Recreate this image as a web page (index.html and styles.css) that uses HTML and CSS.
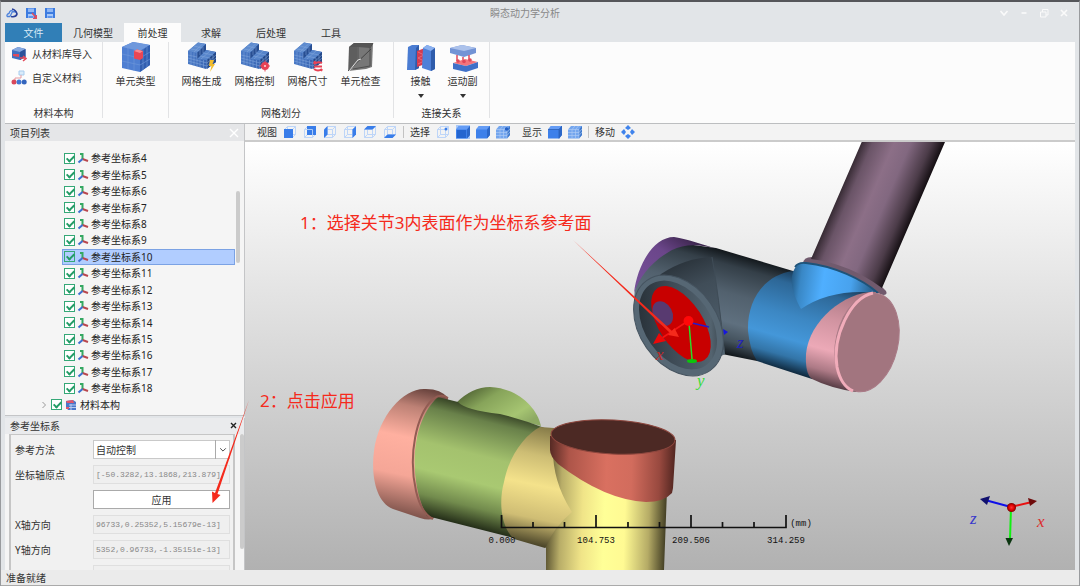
FILE: index.html
```html
<!DOCTYPE html>
<html lang="zh-CN">
<head>
<meta charset="utf-8">
<title>瞬态动力学分析</title>
<link rel="stylesheet" href="styles.css">
</head>
<body>
<svg class="defs" aria-hidden="true">
  <defs>
    <linearGradient id="steel" x1="0" x2="1"><stop offset="0" stop-color="#4a7ac6"/><stop offset="1" stop-color="#2f5aa8"/></linearGradient>
    <symbol id="axes" viewBox="0 0 12 12"><path d="M5.500 7V2H3" fill="none" stroke="#35a862" stroke-width="2"/><path d="M5.500 7L11 9" stroke="#b9474f" stroke-width="2"/><path d="M5.500 7L1.500 10.500" stroke="#3c6fd0" stroke-width="2"/></symbol>
    <symbol id="cubeline" viewBox="0 0 14 14"><path d="M1.500 4.500H9.500V12.500H1.500ZM4.500 1.500H12.500V9.500H4.500ZM1.500 4.500L4.500 1.500M9.500 4.500L12.500 1.500M9.500 12.500L12.500 9.500M1.500 12.500L4.500 9.500" fill="none" stroke="#bdd5f8" stroke-width="1"/></symbol>
    <symbol id="cubefull" viewBox="0 0 14 14"><path d="M0 4.500L3 1H14V10L11 13.500H0Z" fill="#3d80ea"/><path d="M0 4.500L3 1H14L11 4.500Z" fill="#649cf5"/><path d="M11 4.500L14 1V10L11 13.500Z" fill="#2b67c8"/></symbol>
    <symbol id="cubemesh" viewBox="0 0 14 14"><path d="M0 4.500L3 1H14V10L11 13.500H0Z" fill="#74a6ee"/><path d="M11 4.500L14 1V10L11 13.500Z" fill="#3e78cc"/><path d="M0 4.500H11V13M4 4.500V13M7.500 4.500V13M0 7.500H11L14 4M0 10.500H11L14 7M4 4.500L7 1M7.500 4.500L10.500 1" fill="none" stroke="#b4cff5" stroke-width=".6"/></symbol>
    <symbol id="mesh" viewBox="0 0 30 30">
      <path d="M1 9L11 0.500L19 2L19 8L29 10V20L19 27L1 22Z" fill="url(#steel)"/>
      <path d="M1 9L11 .5L19 2L10 11Z" fill="#5f8ccf"/><path d="M10 17L19 8L29 10L20 18Z" fill="#5684ca"/><path d="M20 18L29 10V20L20 27Z" fill="#244888"/><path d="M10 11L19 2V8L10 17Z" fill="#274e92"/>
      <path d="M4 10V23M7 10.500V24M10 11V24.500M13 17.500V25M16.500 18V26M20 18V27M1 13L10 15M1 16L20 21L29 13M1 19L20 24L29 16M4 7L12 8.500M7 4L15 6M13 7V13M16 5V11M13 14L23 16M16 11L26 13M23 16V24M26 13V22M7 10L16 1.500M14 17L23 9" fill="none" stroke="#86abdf" stroke-width=".5"/>
    </symbol>
    <symbol id="disk" viewBox="0 0 12 12"><path d="M1 1H11V11H1Z" fill="#3c7be0"/><path d="M3 1.500H9V5H3Z" fill="#8eb7f5"/><path d="M3 7H9V11H3Z" fill="#a5c8fa"/><path d="M3.500 9H8.500V11H3.500Z" fill="#5e95ec"/></symbol>
  </defs>
</svg>
<div class="app">
  <header class="titlebar">
    <div class="quick">
      <svg class="i12" viewBox="0 0 12 12"><path d="M1 9.500H4M1 9.500Q.5 7 3 6.500Q4 2.500 7 4M4 9.500L6.500 4.500L10 5" fill="none" stroke="#4c82dc" stroke-width="1.300"/><path d="M6 2Q10 3 11 7Q10 10.500 5 9.500" fill="none" stroke="#28419b" stroke-width="1.600"/></svg>
      <svg class="i12" viewBox="0 0 12 12"><use href="#disk"/><path d="M7 6L11.500 11M11.500 8V11.500H8" fill="none" stroke="#e34b5b" stroke-width="1.400"/></svg>
      <svg class="i12"><use href="#disk"/></svg>
    </div>
    <h1>瞬态动力学分析</h1>
    <div class="winbtns">
      <button aria-label="折叠"><svg viewBox="0 0 10 10"><path d="M1.500 3L5 7L8.500 3"/></svg></button>
      <button aria-label="最小化"><svg viewBox="0 0 10 10"><path d="M2.500 5H7.500"/></svg></button>
      <button aria-label="还原"><svg class="thin" viewBox="0 0 10 10"><path d="M1.500 4H7V9H1.500ZM3.500 4V1.500H9V7H7"/></svg></button>
      <button aria-label="关闭"><svg viewBox="0 0 10 10"><path d="M2 2L8 8M8 2L2 8"/></svg></button>
    </div>
  </header>
  <nav class="tabs">
    <button class="tab file">文件</button><button class="tab wide">几何模型</button><button class="tab active">前处理</button><button class="tab">求解</button><button class="tab">后处理</button><button class="tab">工具</button>
  </nav>
  <section class="ribbon">
    <div class="group g-material">
      <div class="lines">
        <button class="line"><svg class="i16" viewBox="0 0 16 16"><path d="M1 4L7 1L14.500 3V11L9 14L1 12Z" fill="#3f6fc0"/><path d="M1 4L7 1L14.500 3L9 6Z" fill="#86a9e0"/><path d="M9 6L14.500 3V11L9 14Z" fill="#2c529a"/><path d="M2 8H8V11L2 10Z" fill="#df4b5c"/><path d="M9 12H14M12 10L15 12.500L12 15" fill="none" stroke="#e34b5b" stroke-width="1.500"/></svg>从材料库导入</button>
        <button class="line"><svg class="i16" viewBox="0 0 16 16"><path d="M8 1H13V5H8Z" fill="#d9ebfa" stroke="#a9cdee"/><path d="M10 5V8H4V11" fill="none" stroke="#e69aa0"/><circle cx="3" cy="12" r="2.500" fill="#d9485b"/><circle cx="8" cy="12" r="2.500" fill="#4277d3"/><circle cx="13.200" cy="12" r="2.500" fill="#3465bd"/></svg>自定义材料</button>
      </div>
      <div class="caption">材料本构</div>
    </div>
    <div class="group g-type">
      <div class="tools"><button class="tool"><svg class="i30" viewBox="0 0 30 30"><path d="M1 5L12 0L29 3V23L19 30L1 26Z" fill="#4f7fd2"/><path d="M1 5L12 0L29 3L19 9Z" fill="#6e98dd"/><path d="M19 9L29 3V23L19 30Z" fill="#315eb0"/><path d="M7 6V27M13 7.500V29M1 12L19 16L29 10M1 19L19 23L29 17M7 2.500L24 6M22 7V28M26 5V25M6 6L18 1M13 7.500L24 2" fill="none" stroke="#7198da" stroke-width=".6"/><path d="M13 9L16 7.500L22 9V16L19 18L13 16.500Z" fill="#ea4654"/><path d="M13 9L16 7.500L22 9L19 11Z" fill="#fa8990"/></svg><span>单元类型</span></button></div>
      <div class="caption"></div>
    </div>
    <div class="group g-mesh">
      <div class="tools">
        <button class="tool"><svg class="i30" viewBox="0 0 30 30"><use href="#mesh"/><path d="M23 18H27L25.500 22H28L23 30L24.500 24H22Z" fill="#f2bd2d"/></svg><span>网格生成</span></button>
        <button class="tool"><svg class="i30" viewBox="0 0 30 30"><use href="#mesh"/><circle cx="25" cy="24" r="2.500" fill="#fbdadc" stroke="#e84355" stroke-width="3"/><path d="M25 18.500V29.500M19.500 24H30" stroke="#e84355" stroke-dasharray="2 7"/></svg><span>网格控制</span></button>
        <button class="tool"><svg class="i30" viewBox="0 0 30 30"><use href="#mesh"/><path d="M21 22Q25 19 29 21M21 22L22 19M29 27Q25 30 21 27M29 27L28 29M21 24.500H29" fill="none" stroke="#e84355" stroke-width="2"/></svg><span>网格尺寸</span></button>
        <button class="tool"><svg class="i30" viewBox="0 0 30 30"><path d="M3 5L8 1H27L26 25L20 27L2 29Z" fill="#777"/><path d="M3 5L8 1H27L24 6L12 5Z" fill="#555"/><path d="M3 5V28L11 18V5Z" fill="#5e5e5e"/><path d="M12 5V17M24 6V24L7 27M24 6L27 1" fill="none" stroke="#505050"/><path d="M2 29L25 7" fill="none" stroke="#444"/><path d="M3 29L12 18L15 17" fill="none" stroke="#ddd"/></svg><span>单元检查</span></button>
      </div>
      <div class="caption">网格划分</div>
    </div>
    <div class="group g-link">
      <div class="tools">
        <button class="tool"><svg class="i30" viewBox="0 0 30 30"><path d="M2 5L6 3H13V26L9 28H1Z" fill="#4a7cd2"/><path d="M10 6L13 3V26L9 28Z" fill="#2f5cab"/><path d="M11 9L19 6V22L11 25Z" fill="#d43c50"/><path d="M12 10L18 13L12 16L18 19L12 22" fill="none" stroke="#e96a78"/><path d="M17 6L21 3L29 6V27L25 29L16 26Z" fill="#4e80d8"/><path d="M17 6L21 3L29 6L25 9Z" fill="#8ab0ef"/><path d="M25 9L29 6V27L25 29Z" fill="#2f5cab"/></svg><span>接触</span><i class="caret"></i></button>
        <button class="tool"><svg class="i30" viewBox="0 0 30 30"><path d="M2 6L14 3L28 6V11L16 15L2 11Z" fill="#7293d5"/><path d="M2 6L14 3L28 6L16 9Z" fill="#acc2eb"/><path d="M9 13V19M15 15V20M21 13V18" stroke="#df4759" stroke-width="1.500"/><path d="M5 21L17 17L30 20L18 24Z" fill="#f3747c"/><path d="M5 21L18 24L30 20V26L18 30L5 27Z" fill="#3f70c8"/><circle cx="10" cy="19" r="1.800" fill="#df4759"/><circle cx="16" cy="19.500" r="1.800" fill="#df4759"/><circle cx="22" cy="18" r="1.800" fill="#df4759"/></svg><span>运动副</span><i class="caret"></i></button>
      </div>
      <div class="caption">连接关系</div>
    </div>
  </section>
  <main class="work">
    <aside class="side">
      <section class="panel tree-panel">
        <div class="panel-head"><h2>项目列表</h2><button class="pale" aria-label="关闭"><svg viewBox="0 0 10 10"><path d="M1 1L9 9M9 1L1 9"/></svg></button></div>
        <div class="tree-body">
          <ul class="tree">
            <li><label><input type="checkbox" checked><svg><use href="#axes"/></svg>参考坐标系4</label></li>
            <li><label><input type="checkbox" checked><svg><use href="#axes"/></svg>参考坐标系5</label></li>
            <li><label><input type="checkbox" checked><svg><use href="#axes"/></svg>参考坐标系6</label></li>
            <li><label><input type="checkbox" checked><svg><use href="#axes"/></svg>参考坐标系7</label></li>
            <li><label><input type="checkbox" checked><svg><use href="#axes"/></svg>参考坐标系8</label></li>
            <li><label><input type="checkbox" checked><svg><use href="#axes"/></svg>参考坐标系9</label></li>
            <li><label class="selected"><input type="checkbox" checked><svg><use href="#axes"/></svg>参考坐标系10</label></li>
            <li><label><input type="checkbox" checked><svg><use href="#axes"/></svg>参考坐标系11</label></li>
            <li><label><input type="checkbox" checked><svg><use href="#axes"/></svg>参考坐标系12</label></li>
            <li><label><input type="checkbox" checked><svg><use href="#axes"/></svg>参考坐标系13</label></li>
            <li><label><input type="checkbox" checked><svg><use href="#axes"/></svg>参考坐标系14</label></li>
            <li><label><input type="checkbox" checked><svg><use href="#axes"/></svg>参考坐标系15</label></li>
            <li><label><input type="checkbox" checked><svg><use href="#axes"/></svg>参考坐标系16</label></li>
            <li><label><input type="checkbox" checked><svg><use href="#axes"/></svg>参考坐标系17</label></li>
            <li><label><input type="checkbox" checked><svg><use href="#axes"/></svg>参考坐标系18</label></li>
            <li class="parent"><svg class="twist" viewBox="0 0 6 8"><path d="M1.500 1L4.500 4L1.500 7" fill="none" stroke="#999"/></svg><label><input type="checkbox" checked><svg viewBox="0 0 12 12"><path d="M1 2L8 1L11 3V11H3L1 8Z" fill="#4a77c9"/><path d="M1 2L8 1L9 4H2Z" fill="#e0566a"/><path d="M4 6H11M4 8.500H11M6 5V11" stroke="#b9cdf0"/><path d="M1 9H4" stroke="#e0566a" stroke-width="2"/></svg>材料本构</label></li>
          </ul>
          <div class="scroll tree-scroll"></div>
        </div>
      </section>
      <section class="panel props">
        <div class="panel-head"><h2>参考坐标系</h2><button aria-label="关闭"><svg viewBox="0 0 10 10"><path d="M2 2L7 7M7 2L2 7"/></svg></button></div>
        <div class="props-body">
          <form class="form">
            <label for="method">参考方法</label>
            <div class="pick"><select id="method"><option>自动控制</option></select><svg viewBox="0 0 10 10"><path d="M1.500 3.500L5 7L8.500 3.500" fill="none" stroke="#444" stroke-width="1.200"/></svg></div>
            <label for="origin">坐标轴原点</label><input id="origin" readonly value="[-50.3282,13.1868,213.879]">
            <button type="button" class="apply">应用</button>
            <label for="xdir">X轴方向</label><input id="xdir" readonly value="96733,0.25352,5.15679e-13]">
            <label for="ydir">Y轴方向</label><input id="ydir" readonly value="5352,0.96733,-1.35151e-13]">
            <input class="next" aria-label="Z" readonly>
          </form>
          <div class="scroll props-scroll"></div>
        </div>
      </section>
    </aside>
    <section class="stage">
      <div class="viewbar">
        <span>视图</span>
        <button aria-label="前"><svg viewBox="0 0 14 14"><use href="#cubeline"/><path d="M1 4H10V13H1Z" fill="#397de9"/></svg></button>
        <button aria-label="后"><svg viewBox="0 0 14 14"><use href="#cubeline"/><path d="M4 1H13V10H4Z" fill="#397de9"/><path d="M4 4.500H9.500V10" fill="none" stroke="#a9c9f7"/></svg></button>
        <button aria-label="左"><svg viewBox="0 0 14 14"><use href="#cubeline"/><path d="M1 4.500L4.500 1V9.500L1 13Z" fill="#397de9"/></svg></button>
        <button aria-label="右"><svg viewBox="0 0 14 14"><use href="#cubeline"/><path d="M9.500 4.500L13 1V9.500L9.500 13Z" fill="#397de9"/></svg></button>
        <button aria-label="上"><svg viewBox="0 0 14 14"><use href="#cubeline"/><path d="M1 4.500L4.500 1H13L9.500 4.500Z" fill="#397de9"/></svg></button>
        <button aria-label="下"><svg viewBox="0 0 14 14"><use href="#cubeline"/><path d="M1 13L4.500 9.500H13L9.500 13Z" fill="#397de9"/></svg></button>
        <i class="sep"></i>
        <span>选择</span>
        <button aria-label="点"><svg viewBox="0 0 14 14"><use href="#cubeline"/><circle cx="10" cy="4" r="1.500" fill="#397de9"/></svg></button>
        <button aria-label="面" class="on"><svg viewBox="0 0 14 14"><use href="#cubefull"/><path d="M1 5H10V13H1Z" fill="#2465cf"/></svg></button>
        <button aria-label="体"><svg><use href="#cubefull"/></svg></button>
        <button aria-label="网格"><svg viewBox="0 0 14 14"><use href="#cubemesh"/><circle cx="10.500" cy="4" r="1.700" fill="#245fc5"/></svg></button>
        <span class="lead">显示</span>
        <button aria-label="实体"><svg viewBox="0 0 14 14"><use href="#cubefull"/><path d="M0 4.500H11V13.500M11 4.500L14 1" fill="none" stroke="#2c5fb5" stroke-width=".8"/></svg></button>
        <button aria-label="网格显示"><svg><use href="#cubemesh"/></svg></button>
        <i class="sep"></i>
        <span>移动</span>
        <button aria-label="移动"><svg viewBox="0 0 14 14"><path d="M7 0L10 3L7 5L4 3ZM7 14L10 11L7 9L4 11ZM0 7L3 4L5 7L3 10ZM14 7L11 4L9 7L11 10Z" fill="#3f83ec"/></svg></button>
      </div>
      <div class="canvas">
        <svg class="scene" viewBox="245 142 830 428" role="img" aria-label="机械臂模型">
          <defs>
            <linearGradient id="tube" gradientUnits="userSpaceOnUse" x1="825" y1="227" x2="895" y2="257"><stop offset="0" stop-color="#372b34"/><stop offset=".14" stop-color="#6a5467"/><stop offset=".4" stop-color="#8c6f87"/><stop offset=".6" stop-color="#826880"/><stop offset=".85" stop-color="#4c3c49"/><stop offset="1" stop-color="#171115"/></linearGradient>
            <linearGradient id="gray" gradientUnits="userSpaceOnUse" x1="755" y1="259" x2="728" y2="355"><stop offset="0" stop-color="#12171b"/><stop offset=".13" stop-color="#343f48"/><stop offset=".4" stop-color="#52616e"/><stop offset=".68" stop-color="#5f707f"/><stop offset=".86" stop-color="#42505b"/><stop offset="1" stop-color="#11161a"/></linearGradient>
            <linearGradient id="neck" gradientUnits="userSpaceOnUse" x1="685" y1="260" x2="722" y2="350"><stop offset="0" stop-color="#2b343c"/><stop offset=".3" stop-color="#404d58"/><stop offset="1" stop-color="#526371"/></linearGradient>
            <linearGradient id="blue" gradientUnits="userSpaceOnUse" x1="794" y1="269" x2="766" y2="366"><stop offset="0" stop-color="#173550"/><stop offset=".15" stop-color="#2d6797"/><stop offset=".45" stop-color="#3c87c3"/><stop offset=".68" stop-color="#4497d9"/><stop offset=".85" stop-color="#3375a8"/><stop offset="1" stop-color="#0d2437"/></linearGradient>
            <linearGradient id="collar" gradientUnits="userSpaceOnUse" x1="791" y1="280" x2="870" y2="292"><stop offset="0" stop-color="#245a85"/><stop offset=".12" stop-color="#3987c5"/><stop offset=".4" stop-color="#4fafff"/><stop offset=".75" stop-color="#48a2ed"/><stop offset="1" stop-color="#2a6594"/></linearGradient>
            <linearGradient id="pink" gradientUnits="userSpaceOnUse" x1="858" y1="290" x2="832" y2="388"><stop offset="0" stop-color="#a4727e"/><stop offset=".35" stop-color="#d194a1"/><stop offset=".65" stop-color="#eca9b7"/><stop offset=".85" stop-color="#ad7a86"/><stop offset="1" stop-color="#503840"/></linearGradient>
            <linearGradient id="violet" x1="0" y1="1" x2="1" y2="0"><stop offset="0" stop-color="#77509a"/><stop offset=".55" stop-color="#6b468a"/><stop offset="1" stop-color="#21132b"/></linearGradient>
            <linearGradient id="hole" x1="0" y1="0" x2="1" y2="1"><stop offset="0" stop-color="#20272d"/><stop offset=".45" stop-color="#3e4b56"/><stop offset=".8" stop-color="#53636f"/><stop offset="1" stop-color="#20272d"/></linearGradient>
            <linearGradient id="salmon" gradientUnits="userSpaceOnUse" x1="422" y1="389" x2="396" y2="512"><stop offset="0" stop-color="#6d4640"/><stop offset=".15" stop-color="#bd8175"/><stop offset=".4" stop-color="#ffb0a0"/><stop offset=".7" stop-color="#f5a697"/><stop offset="1" stop-color="#82564e"/></linearGradient>
            <linearGradient id="green" gradientUnits="userSpaceOnUse" x1="492" y1="408" x2="462" y2="527"><stop offset="0" stop-color="#2e391f"/><stop offset=".12" stop-color="#69814a"/><stop offset=".4" stop-color="#a4c26e"/><stop offset=".62" stop-color="#a9c972"/><stop offset=".82" stop-color="#728b4d"/><stop offset="1" stop-color="#1c2413"/></linearGradient>
            <linearGradient id="bulb" x1="0" y1="0" x2="1" y2=".7"><stop offset="0" stop-color="#394824"/><stop offset=".4" stop-color="#87a45a"/><stop offset=".8" stop-color="#a6c572"/><stop offset="1" stop-color="#8da963"/></linearGradient>
            <linearGradient id="sand" gradientUnits="userSpaceOnUse" x1="544" y1="426" x2="520" y2="542"><stop offset="0" stop-color="#847947"/><stop offset=".25" stop-color="#cdbd74"/><stop offset=".5" stop-color="#f4e28b"/><stop offset=".78" stop-color="#cfbd74"/><stop offset="1" stop-color="#4b4529"/></linearGradient>
            <linearGradient id="yellow" gradientUnits="userSpaceOnUse" x1="546" y1="520" x2="667" y2="524"><stop offset="0" stop-color="#57502f"/><stop offset=".12" stop-color="#b8ad68"/><stop offset=".3" stop-color="#f0e488"/><stop offset=".48" stop-color="#ffff97"/><stop offset=".65" stop-color="#fffa93"/><stop offset=".85" stop-color="#b5ab66"/><stop offset="1" stop-color="#3c3820"/></linearGradient>
            <linearGradient id="brick" gradientUnits="userSpaceOnUse" x1="550" y1="460" x2="676" y2="464"><stop offset="0" stop-color="#582b25"/><stop offset=".15" stop-color="#ad5549"/><stop offset=".45" stop-color="#d97060"/><stop offset=".65" stop-color="#d26c5d"/><stop offset=".87" stop-color="#98493f"/><stop offset="1" stop-color="#4e241f"/></linearGradient>
            <radialGradient id="ball"><stop offset="0" stop-color="#f33"/><stop offset=".6" stop-color="#d00"/><stop offset="1" stop-color="#700"/></radialGradient>
          </defs>

          <!-- upper arm -->
          <path d="M803 264Q803 257 812 257C835 259 870 274 886 291Q888 295 883 295Z" fill="#715a6d"/>
          <path d="M861.700 142H945L882 288Q850 264 811 259Z" fill="url(#tube)"/>
          <path d="M686 244L716 248L793 271L800 300L757 361L722 354L634 300Q636 250 686 244Z" fill="url(#gray)"/>
          <path d="M634 293C637 266 653 237 674 237Q684 238 717 249Q690 241 672 250C652 261 640 276 634 293Z" fill="url(#violet)"/>
          <path d="M661 274Q685 258 712 257Q719 297 725 354L690 372L640 300Z" fill="url(#neck)"/>
          <path d="M712 257Q719 297 724 350" fill="none" stroke="#3f4c57"/>
          <ellipse cx="678.500" cy="325.500" rx="39" ry="55" transform="rotate(-35 678.500 325.500)" fill="#566774" stroke="#45535f"/>
          <ellipse cx="678" cy="325" rx="33" ry="49" transform="rotate(-35 678 325)" fill="url(#hole)"/>
          <ellipse cx="681" cy="324" rx="22" ry="43" transform="rotate(-33 681 324)" fill="#c80000"/>
          <ellipse cx="662.700" cy="313.500" rx="9.500" ry="13" transform="rotate(-28 662.700 313.500)" fill="#583a70"/>

          <path d="M793 271C764 275 747 300 748 331Q750 351 757 361L812 379L850 300L876 292Z" fill="url(#blue)"/>
          <path d="M795 268Q798 262 806 263C834 266 862 279 878 293Q832 288 801 309C793 294 788 280 795 268Z" fill="url(#collar)"/>
          <path d="M795 267Q798 262 806 263C834 266 862 279 878 293" fill="none" stroke="#1e5379" stroke-width="1.800"/>
          <path d="M876 292C848 290 809 319 806 354Q805 374 812 379Q830 388 856 392Z" fill="url(#pink)"/>
          <ellipse cx="867" cy="342.500" rx="31" ry="50" transform="rotate(13 867 342.500)" fill="#a2757f" stroke="#a97a86"/>
          <path d="M873 293C850 298 832 337 837 367Q841 386 853 391" fill="none" stroke="#f1acba" stroke-width="3"/>

          <path d="M688 321L662 338" stroke="#f51313" stroke-width="1.500"/><path d="M653 344L659 333L666 341Z" fill="#ed0808"/>
          <path d="M689 323L692 359" stroke="#28dc28" stroke-width="1.500"/><ellipse cx="692" cy="361" rx="5" ry="2" fill="#0cc40c"/>
          <path d="M692 323L709 327" stroke="#2419cf" stroke-width="1.500"/><path d="M723 329L728 332L724 335Z" fill="#1515df"/>
          <circle cx="688.500" cy="321" r="5" fill="#ff0808"/>
          <text class="axis" x="656" y="360" fill="#c62828">x</text><text class="axis" x="697" y="386" fill="#38dc38">y</text><text class="axis" x="737" y="348" fill="#2222b8">z</text>

          <!-- lower arm -->
          <path d="M456 403Q472 387 490 387C517 388 537 407 541 426L507 417Q480 411 456 412Z" fill="url(#bulb)"/>
          <path d="M426 389Q441 389 448 398L434 518Q430 521 420 518L393 509C375 502 371 473 374 451C379 414 405 387 426 389Z" fill="url(#salmon)"/>
          <path d="M438 397L458 402Q465 410 500 414Q525 420 550 430L514 538L427 516C409 484 409 423 438 397Z" fill="url(#green)"/>
          <path d="M448 398Q441 393 433 399C416 415 408 455 416 491Q421 513 433 519" fill="none" stroke="#925c53" stroke-width="2"/>
          <path d="M540 427L554 428L580 525L545 548L514 539C500 526 499 500 504 482C509 455 526 434 540 427Z" fill="url(#sand)"/>
          <path d="M553 442Q551 480 572 512Q553 528 546 547V570H664L667 490Z" fill="url(#yellow)"/>
          <path d="M550 436V450Q550 456 558 464Q605 500 646 502Q664 502 672 493L673 488L676 440Z" fill="url(#brick)"/>
          <ellipse cx="613" cy="437" rx="62" ry="17" transform="rotate(3 613 437)" fill="#4c2924" stroke="#8d473e"/>

          <!-- ruler -->
          <path d="M501.500 515V527.500H786V515M596 515V527M691 515V527M533 522V527M564.500 522V527M628 522V527M659.500 522V527M722.500 522V527M754 522V527" fill="none" stroke="#111" stroke-width="1.700"/>
          <g class="ruler"><text x="502" y="543">0.000</text><text x="596" y="543">104.753</text><text x="691" y="543">209.506</text><text x="786" y="543">314.259</text><text x="801" y="526">(mm)</text></g>

          <!-- orientation triad -->
          <path d="M1011 507L985 500" stroke="#1010e8" stroke-width="2"/><path d="M980 499L990 496L987 505Z" fill="#10106e"/>
          <path d="M1011 507L1032 502" stroke="#e81010" stroke-width="2"/><path d="M1037 501L1028 498L1030 506Z" fill="#6f0b0b"/>
          <path d="M1011 508L1010 539" stroke="#12f012" stroke-width="2"/><path d="M1005.500 538H1013L1009 546Z" fill="#0b3510"/>
          <circle cx="1011.500" cy="507.500" r="4.500" fill="url(#ball)"/>
          <text class="axis" x="970" y="524" fill="#3838cc">z</text><text class="axis" x="1037" y="527" fill="#dc2c2c">x</text>

          <!-- callouts -->
          <g class="callout"><text x="300" y="229">1：选择关节3内表面作为坐标系参考面</text><text x="260" y="407">2：点击应用</text>
          <path d="M573 240L672 331L674.500 328L679 337L668 335L670 333Z"/><path d="M249 400L217.500 494L220.500 495L212.500 503L212 491.500L215 493Z"/></g>
        </svg>
      </div>
    </section>
  </main>
  <footer class="status"><span>准备就绪</span></footer>
</div>
</body>
</html>
```
FILE: styles.css
```css
* { box-sizing: border-box; }
body, h1, h2, ul { margin: 0; padding: 0; }
body {
  font: 10px/14px "Noto Sans", "Noto Sans CJK SC", sans-serif;
  color: #333;
}
button, input, select { font: inherit; color: inherit; }
button { border: 0; padding: 0; background: none; }
svg { display: block; flex: none; }
.defs { position: absolute; width: 0; height: 0; }

.app {
  display: flex;
  flex-direction: column;
  height: 100vh;
  min-width: 760px;
  min-height: 500px;
  padding: 0 4px;
  border-top: 2px solid #55565a;
  border-left: 1px solid #999b9e;
  border-right: 1px solid #999b9e;
  background: #e2e5e8;
}

.titlebar { display: grid; grid-template-columns: 1fr auto 1fr; align-items: center; height: 21px; flex: none; }
.quick { display: flex; gap: 7px; padding-left: 1px; }
.i12 { width: 12px; height: 12px; }
.titlebar h1 { font-size: 10px; font-weight: 400; color: #888; padding-right: 30px; }
.winbtns { display: flex; justify-content: flex-end; gap: 10px; padding-right: 6px; }
.winbtns svg { width: 10px; height: 10px; fill: none; stroke: #fafafa; stroke-width: 1.6; }
.winbtns .thin { stroke-width: 1; }

.tabs { display: flex; height: 19px; flex: none; }
.tab { width: 60px; }
.tab.wide { width: 62px; }
.tab.file { width: 57px; background: #317fb7; color: #d8e9f5; }
.tab.active { width: 57px; background: #fcfcfc; }

.ribbon { display: flex; height: 81px; flex: none; background: #fcfcfc; }
.group { display: flex; flex-direction: column; margin-bottom: 5px; border-right: 1px solid #e2e3e5; }
.g-material { width: 98px; }
.g-type { width: 66px; }
.g-mesh { width: 225px; }
.g-link { width: 96px; }
.caption { height: 14px; margin-bottom: -2px; text-align: center; }
.lines { flex: 1; display: flex; flex-direction: column; gap: 8px; padding: 4px 0 0 6px; }
.line { display: flex; align-items: center; gap: 5px; height: 16px; white-space: nowrap; }
.i16 { width: 16px; height: 16px; }
.tools { flex: 1; display: flex; justify-content: center; }
.tool { display: flex; flex-direction: column; align-items: center; gap: 2px; width: 53px; }
.g-link .tool { width: 42px; }
.i30 { width: 30px; height: 30px; }
.caret { margin-top: 4px; border: 3px solid transparent; border-top: 4px solid #333; border-bottom: 0; }

.work { flex: 1; display: flex; min-height: 0; border-top: 1px solid #bcbec0; }
.side { display: flex; flex-direction: column; gap: 2px; width: 240px; flex: none; }
.panel { display: flex; flex-direction: column; background: #f5f5f5; border: 1px solid #c4c5c7; border-top: 0; border-left: 0; }
.tree-panel { flex: 1; min-height: 0; }
.panel-head { display: flex; justify-content: space-between; align-items: center; height: 17px; flex: none; padding: 0 5px; background: #e5e6e8; }
.panel-head h2 { font-size: 10px; font-weight: 400; }
.panel-head svg { width: 10px; height: 10px; fill: none; stroke: #222; stroke-width: 1.4; }
.panel-head .pale svg { stroke: #fff; }
.tree-body { position: relative; flex: 1; min-height: 0; padding: 9px 9px 2px 0; }
.tree { display: flex; flex-direction: column; height: 100%; list-style: none; color: #222; }
.tree li { flex: 1; display: flex; padding-left: 57px; min-height: 0; }
.tree li.parent { padding-left: 36px; align-items: center; gap: 2px; }
.tree .twist { width: 6px; height: 8px; }
.tree label { flex: 1; display: flex; align-items: center; gap: 2px; padding-left: 1px; border: 1px solid transparent; }
.tree .parent label { gap: 3px; }
.tree label.selected { background: #b1cdff; border-color: #7ba2e4; }
.tree label svg { width: 12px; height: 12px; }
.tree input { appearance: none; position: relative; width: 11px; height: 11px; margin: 0; border: 1px solid #35a877; background: #fff; }
.tree .selected input { background: transparent; }
.tree input:checked::after { content: ""; position: absolute; left: 3px; top: 0; width: 3px; height: 6px; border: solid #239c66; border-width: 0 2px 2px 0; transform: rotate(45deg); }
.scroll { position: absolute; width: 4px; border-radius: 2px; background: #cbcbcb; }
.tree-scroll { right: 4px; top: 50px; height: 72px; }

.props { height: 152px; flex: none; border-bottom: 0; }
.props .panel-head { height: 16px; background: #eaebed; }
.props-body { position: relative; flex: 1; min-height: 0; padding: 0 9px 0 4px; overflow: hidden; }
.props-scroll { right: 0; top: 0; height: 115px; }
.form { display: grid; grid-template-columns: 72px 1fr; grid-auto-rows: 19px; gap: 6px; align-items: center; height: 100%; padding: 5px 3px 0 4px; border: 1px solid #c6c6c6; border-width: 1px 2px 0; background: #f1f1f1; overflow: hidden; }
.form input { width: 100%; min-width: 0; height: 19px; padding: 0 2px; border: 1px solid #dfdfdf; background: #efefef; color: #888; font-family: "Liberation Mono", monospace; font-size: 8px; }
.form .apply { grid-column: 2; height: 19px; border: 1px solid #aaa; background: #fff; }
.form .next { grid-column: 2; }
.pick { position: relative; height: 19px; }
.pick select { appearance: none; width: 100%; height: 19px; padding: 0 2px; border: 1px solid #c9c9c9; border-radius: 0; background: #fff; }
.pick svg { position: absolute; right: 0; top: 0; width: 15px; height: 19px; padding: 0 3px; border-left: 1px solid #aaa; }

.stage { flex: 1; display: flex; flex-direction: column; min-width: 0; }
.viewbar { display: flex; align-items: center; gap: 6px; height: 18px; flex: none; padding-left: 12px; background: #f3f3f3; border-bottom: 2px solid #cbcbcb; white-space: nowrap; }
.viewbar svg { width: 14px; height: 14px; }
.viewbar .on { background: #a8c8f8; }
.viewbar .lead { margin-left: 6px; }
.sep { width: 1px; height: 12px; background: #c2c2c2; }
.canvas { position: relative; z-index: 1; flex: 1; min-height: 0; background: linear-gradient(#fff, #b1b1b1); }
.scene { width: 100%; height: 100%; overflow: visible; pointer-events: none; }
.axis { font: italic 17px "Liberation Serif", serif; }
.ruler { font: 9px "Liberation Mono", monospace; fill: #111; text-anchor: middle; }
.callout { font: 17px "Noto Sans", "Noto Sans CJK SC", sans-serif; fill: #f52a1c; }

.status { display: flex; align-items: center; height: 16px; flex: none; margin: 0 -4px; padding-left: 5px; background: #ebebeb; border-bottom: 1px solid #aaa; }
```
